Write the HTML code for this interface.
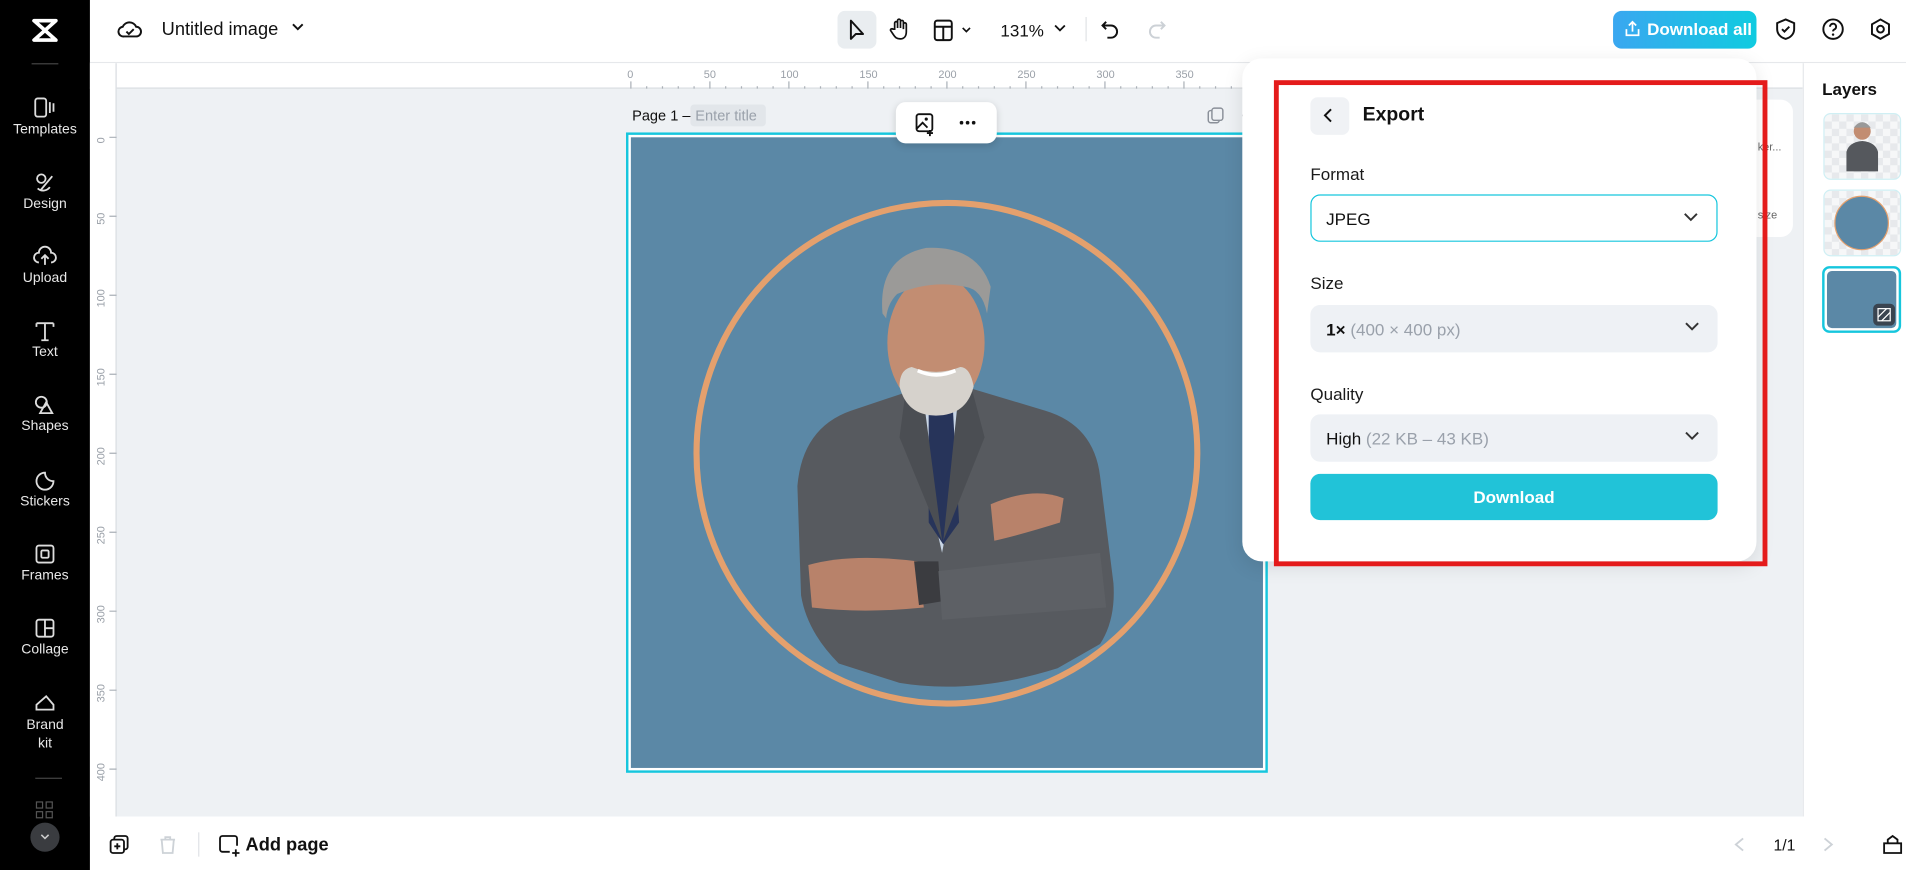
<!DOCTYPE html>
<html><head><meta charset="utf-8"><style>
*{box-sizing:border-box;margin:0;padding:0}
html,body{width:1906px;height:870px;overflow:hidden;background:#fff}
#w{position:absolute;left:0;top:0;width:1568px;height:716px;transform:scale(1.21556,1.2151);transform-origin:0 0;font-family:"Liberation Sans",sans-serif;color:#111;background:#fff}
.a{position:absolute}
.side{left:0;top:0;width:74px;height:716px;background:#000;color:#e8e8e8}
.si{position:absolute;left:0;width:74px;text-align:center;font-size:11.5px}
.si svg{display:block;margin:0 auto 3px}
.lab{font-size:14px;color:#1a1a1a}
.sel{position:absolute;left:1078px;width:335px;height:39px;border-radius:8px;background:#eef1f5;font-size:14px;padding:12px 13px;font-weight:bold}
.sel span{color:#9aa1ab;font-weight:normal}
.chev{position:absolute;right:14px;top:13px}
</style></head><body><div id="w">
<!-- sidebar -->
<div class="a side">
 <svg class="a" style="left:25px;top:14px" width="24" height="22" viewBox="0 0 24 22"><path d="M3 3h18L3 19h18L3 3z" fill="none" stroke="#fff" stroke-width="3" stroke-linejoin="round"/></svg>
 <div class="a" style="left:26px;top:52px;width:22px;height:1px;background:#444"></div>
 <div class="si" style="top:80px"><svg width="20" height="18"><rect x="2" y="1" width="9" height="15" rx="2" fill="none" stroke="#ddd" stroke-width="1.5"/><path d="M14 4v9M17 5v7" stroke="#ddd" stroke-width="1.5"/></svg>Templates</div>
 <div class="si" style="top:141px"><svg width="20" height="18"><circle cx="7" cy="6" r="3.5" fill="none" stroke="#ddd" stroke-width="1.5"/><path d="M6 16l10-12M4 14c3 3 8 2 10-1" fill="none" stroke="#ddd" stroke-width="1.5"/></svg>Design</div>
 <div class="si" style="top:202px"><svg width="20" height="18"><path d="M5 14a4 4 0 0 1 0-8 5 5 0 0 1 10 0 4 4 0 0 1 0 8M10 16V8M7 11l3-3 3 3" fill="none" stroke="#ddd" stroke-width="1.5"/></svg>Upload</div>
 <div class="si" style="top:263px"><svg width="20" height="18"><path d="M3 3h14M10 3v14M7 17h6M3 3v3M17 3v3" fill="none" stroke="#ddd" stroke-width="1.5"/></svg>Text</div>
 <div class="si" style="top:324px"><svg width="20" height="18"><circle cx="7" cy="7" r="4.5" fill="none" stroke="#ddd" stroke-width="1.5"/><path d="M11 7l5 9H6z" fill="none" stroke="#ddd" stroke-width="1.5"/></svg>Shapes</div>
 <div class="si" style="top:386px"><svg width="20" height="18"><path d="M17 10A7 7 0 1 1 10 3c0 4 3 7 7 7z" fill="none" stroke="#ddd" stroke-width="1.5"/></svg>Stickers</div>
 <div class="si" style="top:447px"><svg width="20" height="18"><rect x="3" y="2" width="14" height="14" rx="2" fill="none" stroke="#ddd" stroke-width="1.5"/><rect x="7" y="6" width="6" height="6" rx="1" fill="none" stroke="#ddd" stroke-width="1.5"/></svg>Frames</div>
 <div class="si" style="top:508px"><svg width="20" height="18"><rect x="3" y="2" width="14" height="14" rx="2" fill="none" stroke="#ddd" stroke-width="1.5"/><path d="M10 2v14M10 9h7" stroke="#ddd" stroke-width="1.5"/></svg>Collage</div>
 <div class="si" style="top:569px;line-height:15px"><svg width="20" height="18"><path d="M3 15v-4l8-7 6 7v4z" fill="none" stroke="#ddd" stroke-width="1.5"/></svg>Brand<br>kit</div>
 <div class="a" style="left:29px;top:640px;width:22px;height:1px;background:#444"></div>
 <svg class="a" style="left:29px;top:659px" width="16" height="16"><rect x="1" y="1" width="5" height="5" fill="none" stroke="#555"/><rect x="9" y="1" width="5" height="5" fill="none" stroke="#555"/><rect x="1" y="9" width="5" height="5" fill="none" stroke="#555"/><rect x="9" y="9" width="5" height="5" fill="none" stroke="#555"/></svg>
 <div class="a" style="left:25px;top:677px;width:24px;height:24px;border-radius:50%;background:#3a3c40"></div>
 <svg class="a" style="left:32px;top:685px" width="10" height="8"><path d="M2 2l3 3 3-3" fill="none" stroke="#ccc" stroke-width="1.3"/></svg>
</div>
<div class="a" style="left:74px;top:333px;width:8px;height:52px;background:#2b2d31;border-radius:0 8px 8px 0"></div>
<!-- top bar -->
<div class="a" style="left:74px;top:0;width:1494px;height:52px;background:#fff;border-bottom:1px solid #e6e8eb"></div>
<svg class="a" style="left:96px;top:14px" width="22" height="20"><path d="M6 16a4 4 0 0 1-1-8 6 6 0 0 1 11 0 4 4 0 0 1 0 8z" fill="none" stroke="#111" stroke-width="1.6"/><path d="M8 12l2 2 4-4" fill="none" stroke="#111" stroke-width="1.6"/></svg>
<div class="a" style="left:133px;top:16px;font-size:15px">Untitled image</div>
<svg class="a" style="left:239px;top:18px" width="12" height="10"><path d="M2 2l4 4 4-4" fill="none" stroke="#111" stroke-width="1.6"/></svg>
<div class="a" style="left:689px;top:9px;width:32px;height:31px;background:#e9edf0;border-radius:6px"></div>
<svg class="a" style="left:696px;top:15px" width="18" height="20"><path d="M4 2v15l4-4 6 0z" fill="none" stroke="#111" stroke-width="1.6" stroke-linejoin="round"/></svg>
<svg class="a" style="left:731px;top:14px" width="18" height="20"><path d="M5 10V5a1.2 1.2 0 0 1 2.4 0v4V3a1.2 1.2 0 0 1 2.4 0v6V4a1.2 1.2 0 0 1 2.4 0v6V6a1.2 1.2 0 0 1 2.4 0v6c0 4-2 6-5 6s-4-1-6-4l-2-3a1.2 1.2 0 0 1 2-1z" fill="none" stroke="#111" stroke-width="1.4"/></svg>
<svg class="a" style="left:767px;top:15px" width="36" height="20"><rect x="2" y="2" width="14" height="16" rx="2" fill="none" stroke="#111" stroke-width="1.6"/><path d="M2 7h14M9 7v11" stroke="#111" stroke-width="1.6"/><path d="M25 8l3 3 3-3" fill="none" stroke="#111" stroke-width="1.4"/></svg>
<div class="a" style="left:823px;top:17px;font-size:14px">131%</div>
<svg class="a" style="left:866px;top:19px" width="12" height="10"><path d="M2 2l4 4 4-4" fill="none" stroke="#111" stroke-width="1.5"/></svg>
<div class="a" style="left:893px;top:14px;width:1px;height:20px;background:#e0e3e6"></div>
<svg class="a" style="left:904px;top:14px" width="20" height="20"><path d="M6 4L3 7l3 3M3 7h7a5 5 0 0 1 0 10H7" fill="none" stroke="#111" stroke-width="1.6"/></svg>
<svg class="a" style="left:941px;top:14px" width="20" height="20"><path d="M14 4l3 3-3 3M17 7h-7a5 5 0 0 0 0 10h3" fill="none" stroke="#ccd1d6" stroke-width="1.6"/></svg>
<div class="a" style="left:1327px;top:9px;width:118px;height:31px;border-radius:7px;background:linear-gradient(90deg,#3aa7f0,#10cbe0);color:#fff;font-size:14px;font-weight:bold;padding:7px 0 0 28px">Download all</div>
<svg class="a" style="left:1335px;top:16px" width="16" height="16"><path d="M8 2v8M5 5l3-3 3 3M3 8v5h10V8" fill="none" stroke="#fff" stroke-width="1.4"/></svg>
<svg class="a" style="left:1459px;top:14px" width="20" height="20"><path d="M10 2l7 3v5c0 4-3 7-7 8-4-1-7-4-7-8V5z" fill="none" stroke="#111" stroke-width="1.6"/><path d="M7 10l2 2 4-4" fill="none" stroke="#111" stroke-width="1.6"/></svg>
<svg class="a" style="left:1498px;top:14px" width="20" height="20"><circle cx="10" cy="10" r="8" fill="none" stroke="#111" stroke-width="1.6"/><path d="M7.5 8a2.5 2.5 0 1 1 3.5 2.3c-.7.3-1 .8-1 1.5" fill="none" stroke="#111" stroke-width="1.6"/><circle cx="10" cy="14.5" r="1" fill="#111"/></svg>
<svg class="a" style="left:1537px;top:14px" width="20" height="20"><path d="M10 2l7 4v8l-7 4-7-4V6z" fill="none" stroke="#111" stroke-width="1.6"/><circle cx="10" cy="10" r="2.8" fill="none" stroke="#111" stroke-width="1.6"/></svg>
<!-- rulers & canvas bg -->
<div class="a" style="left:74px;top:52px;width:1409px;height:620px;background:#eef1f4"></div>
<div class="a" style="left:74px;top:52px;width:1409px;height:21px;background:#fff;border-bottom:1px solid #d8dce0"></div>
<div class="a" style="left:74px;top:52px;width:22px;height:620px;background:#fff;border-right:1px solid #d8dce0"></div>
<svg class="a" style="left:96px;top:52px" width="960" height="21" font-family="Liberation Sans" font-size="9" fill="#9aa0a8">
<g stroke="#aab0b7" stroke-width="1">
<path d="M423 15v6M488 15v6M553 15v6M618 15v6M683 15v6M748 15v6M813 15v6M878 15v6M943 15v6"/>
<path d="M436 19v2M449 19v2M462 19v2M475 19v2M501 19v2M514 19v2M527 19v2M540 19v2M566 19v2M579 19v2M592 19v2M605 19v2M631 19v2M644 19v2M657 19v2M670 19v2M696 19v2M709 19v2M722 19v2M735 19v2M761 19v2M774 19v2M787 19v2M800 19v2M826 19v2M839 19v2M852 19v2M865 19v2M891 19v2M904 19v2M917 19v2M930 19v2"/></g>
<text x="420" y="12">0</text><text x="483" y="12">50</text><text x="546" y="12">100</text><text x="611" y="12">150</text><text x="676" y="12">200</text><text x="741" y="12">250</text><text x="806" y="12">300</text><text x="871" y="12">350</text><text x="936" y="12">400</text></svg>
<svg class="a" style="left:74px;top:73px" width="22" height="599" font-family="Liberation Sans" font-size="9" fill="#9aa0a8">
<g stroke="#aab0b7"><path d="M16 40h6M16 105h6M16 170h6M16 235h6M16 300h6M16 365h6M16 430h6M16 495h6M16 560h6"/></g>
<g transform="rotate(-90)"><text x="-45" y="12">0</text><text x="-112" y="12">50</text><text x="-180" y="12">100</text><text x="-245" y="12">150</text><text x="-310" y="12">200</text><text x="-375" y="12">250</text><text x="-440" y="12">300</text><text x="-505" y="12">350</text><text x="-570" y="12">400</text></g></svg>
<!-- page -->
<div class="a" style="left:520px;top:88px;font-size:12px">Page 1 –</div>
<div class="a" style="left:568px;top:86px;width:62px;height:18px;background:#e2e6ea;border-radius:3px;font-size:12px;color:#9aa1ab;padding:2px 4px">Enter title</div>
<svg class="a" style="left:992px;top:87px" width="46" height="16"><rect x="2" y="4" width="9" height="10" rx="2" fill="none" stroke="#8a9099" stroke-width="1.2"/><rect x="5" y="2" width="9" height="10" rx="2" fill="#eef1f4" stroke="#8a9099" stroke-width="1.2"/><circle cx="31" cy="8" r="1.2" fill="#8a9099"/><circle cx="36" cy="8" r="1.2" fill="#8a9099"/><circle cx="41" cy="8" r="1.2" fill="#8a9099"/></svg>
<div class="a" style="left:515px;top:109px;width:528px;height:527px;border:2px solid #16c6dd;background:#fff"></div>
<div class="a" style="left:519px;top:113px;width:520px;height:519px;background:#5b88a6"></div>
<svg class="a" style="left:519px;top:113px" width="520" height="519" viewBox="519 113 520 519">
<defs><clipPath id="c"><circle cx="779" cy="373" r="202"/></clipPath></defs>
<g clip-path="url(#c)">
<path d="M700 338 L748 322 L800 320 L860 338 Q900 350 905 392 L916 480 Q918 510 905 530 L870 550 Q800 572 740 562 L690 546 Q664 520 659 490 L656 400 Q660 352 700 338Z" fill="#575a5f"/>
<path d="M745 322 L800 322 L775 455Z" fill="#c9d6e6"/>
<path d="M764 338 L784 338 L789 430 L776 448 L764 430Z" fill="#27345a"/>
<path d="M745 322 L760 330 L775 445 L740 360Z M800 322 L788 330 L776 445 L810 360Z" fill="#4b4e53"/>
<path d="M665 465 Q700 455 755 462 L760 500 Q710 505 668 500Z" fill="#b8826a"/>
<path d="M815 415 Q850 400 875 410 L872 430 Q840 440 818 445Z" fill="#b8826a"/>
<path d="M752 462 L772 462 L774 495 L756 498Z" fill="#3b3c40"/>
<path d="M772 470 L905 455 L910 500 L775 510Z" fill="#5d6065"/>
</g>
<ellipse cx="770" cy="282" rx="40" ry="56" fill="#c28d72"/>
<path d="M740 318 Q746 342 770 342 Q795 342 801 318 Q798 302 790 302 Q770 310 750 302 Q740 304 740 318Z" fill="#d6d2cc"/>
<path d="M726 258 Q722 212 762 204 Q804 202 815 236 L812 258 Q808 238 794 236 Q766 230 738 242 Q730 250 729 262Z" fill="#9b9a98"/>
<path d="M755 305 Q770 312 786 305" fill="none" stroke="#fff" stroke-width="3"/>
<circle cx="779" cy="373" r="206" fill="none" stroke="#e4a06d" stroke-width="5"/>
</svg>
<div class="a" style="left:737px;top:84px;width:83px;height:34px;background:#fff;border-radius:8px;box-shadow:0 2px 6px rgba(0,0,0,.15)"></div>
<svg class="a" style="left:751px;top:91px" width="56" height="22"><rect x="3" y="3" width="13" height="14" rx="2" fill="none" stroke="#111" stroke-width="1.5"/><circle cx="11" cy="7" r="1.3" fill="#111"/><path d="M3 15l5-5 4 4M14 16v5M11.5 18.5h5" fill="none" stroke="#111" stroke-width="1.5"/><circle cx="40" cy="10" r="1.5" fill="#111"/><circle cx="45" cy="10" r="1.5" fill="#111"/><circle cx="50" cy="10" r="1.5" fill="#111"/></svg>
<!-- hidden card -->
<div class="a" style="left:1400px;top:82px;width:75px;height:113px;background:#fff;border-radius:10px"></div>
<div class="a" style="left:1446px;top:116px;font-size:9px;color:#666">ker...</div>
<div class="a" style="left:1446px;top:172px;font-size:9px;color:#666">size</div>
<!-- right panel -->
<div class="a" style="left:1483px;top:52px;width:85px;height:620px;background:#fff;border-left:1px solid #e6e8eb"></div>
<div class="a" style="left:1499px;top:65px;font-size:14px;font-weight:bold">Layers</div>
<div class="a" style="left:1500px;top:93px;width:64px;height:55px;border-radius:6px;border:1px solid #cfeff4;background:repeating-conic-gradient(#e7e9ec 0 25%,#f6f7f8 0 50%) 0 0/12px 12px"></div>
<svg class="a" style="left:1515px;top:97px" width="34" height="48"><circle cx="17" cy="11" r="7" fill="#c28d72"/><path d="M10 8q7-9 14 0" fill="#999"/><path d="M4 28q2-8 13-9q11 1 13 9v16H4z" fill="#55585d"/></svg>
<div class="a" style="left:1500px;top:156px;width:64px;height:55px;border-radius:6px;border:1px solid #cfeff4;background:repeating-conic-gradient(#e7e9ec 0 25%,#f6f7f8 0 50%) 0 0/12px 12px"></div>
<div class="a" style="left:1509px;top:161px;width:45px;height:45px;border-radius:50%;background:#5b88a6;border:1px solid #e4a06d"></div>
<div class="a" style="left:1499px;top:219px;width:65px;height:55px;border-radius:6px;border:2px solid #16c6dd;padding:2px"><div style="width:100%;height:100%;background:#5b88a6;border-radius:4px"></div></div>
<div class="a" style="left:1541px;top:250px;width:18px;height:18px;background:#3a4450;border-radius:4px"></div>
<svg class="a" style="left:1544px;top:253px" width="12" height="12"><rect x="1" y="1" width="10" height="10" fill="none" stroke="#fff"/><path d="M1 8l7-7M4 11l7-7" stroke="#fff"/></svg>
<!-- bottom bar -->
<div class="a" style="left:74px;top:672px;width:1494px;height:44px;background:#fff"></div>
<svg class="a" style="left:89px;top:686px" width="18" height="18"><rect x="5" y="2" width="11" height="11" rx="2" fill="none" stroke="#111" stroke-width="1.5"/><rect x="2" y="5" width="11" height="11" rx="2" fill="#fff" stroke="#111" stroke-width="1.5"/><path d="M7.5 8v5M5 10.5h5" stroke="#111" stroke-width="1.5"/></svg>
<svg class="a" style="left:129px;top:686px" width="18" height="18"><path d="M3 5h12M7 5V3h4v2M4 5l1 11h8l1-11" fill="none" stroke="#cdd2d7" stroke-width="1.5"/></svg>
<div class="a" style="left:163px;top:685px;width:1px;height:20px;background:#e0e3e6"></div>
<svg class="a" style="left:179px;top:686px" width="20" height="20"><path d="M10 15H4a2 2 0 0 1-2-2V4a2 2 0 0 1 2-2h10a2 2 0 0 1 2 2v6M15 13v6M12 16h6" fill="none" stroke="#111" stroke-width="1.5"/></svg>
<div class="a" style="left:202px;top:687px;font-size:15px;font-weight:bold">Add page</div>
<svg class="a" style="left:1425px;top:688px" width="12" height="14"><path d="M9 2L3 7l6 5" fill="none" stroke="#cdd2d7" stroke-width="1.5"/></svg>
<div class="a" style="left:1459px;top:688px;font-size:13px">1/1</div>
<svg class="a" style="left:1498px;top:688px" width="12" height="14"><path d="M3 2l6 5-6 5" fill="none" stroke="#cdd2d7" stroke-width="1.5"/></svg>
<svg class="a" style="left:1547px;top:685px" width="20" height="20"><path d="M3 9h14v8H3zM6 9V6l4-3 4 3v3" fill="none" stroke="#111" stroke-width="1.5"/></svg>
<!-- export panel -->
<div class="a" style="left:1022px;top:48px;width:423px;height:414px;background:#fff;border-radius:16px;box-shadow:0 4px 16px rgba(0,0,0,.1)"></div>
<div class="a" style="left:1048px;top:66px;width:406px;height:400px;border:4px solid #e41b1b"></div>
<div class="a" style="left:1078px;top:80px;width:32px;height:31px;background:#f0f2f5;border-radius:6px"></div>
<svg class="a" style="left:1087px;top:88px" width="12" height="14"><path d="M8 2L3 7l5 5" fill="none" stroke="#111" stroke-width="1.6"/></svg>
<div class="a" style="left:1121px;top:86px;font-size:16px;font-weight:bold">Export</div>
<div class="a lab" style="left:1078px;top:135px">Format</div>
<div class="sel" style="top:160px;background:#fff;border:1px solid #16c6dd;font-weight:normal;padding-top:11px;padding-left:12px">JPEG<svg class="chev" width="14" height="10"><path d="M2 2l5 5 5-5" fill="none" stroke="#333" stroke-width="1.6"/></svg></div>
<div class="a lab" style="left:1078px;top:225px">Size</div>
<div class="sel" style="top:251px">1× <span>(400 × 400 px)</span><svg class="chev" width="14" height="10"><path d="M2 2l5 5 5-5" fill="none" stroke="#333" stroke-width="1.6"/></svg></div>
<div class="a lab" style="left:1078px;top:316px">Quality</div>
<div class="sel" style="top:341px;font-weight:normal">High <span>(22 KB – 43 KB)</span><svg class="chev" width="14" height="10"><path d="M2 2l5 5 5-5" fill="none" stroke="#333" stroke-width="1.6"/></svg></div>
<div class="a" style="left:1078px;top:390px;width:335px;height:38px;background:#21c3d8;border-radius:8px;color:#fff;font-size:14px;font-weight:bold;text-align:center;line-height:38px">Download</div>
</div></body></html>
